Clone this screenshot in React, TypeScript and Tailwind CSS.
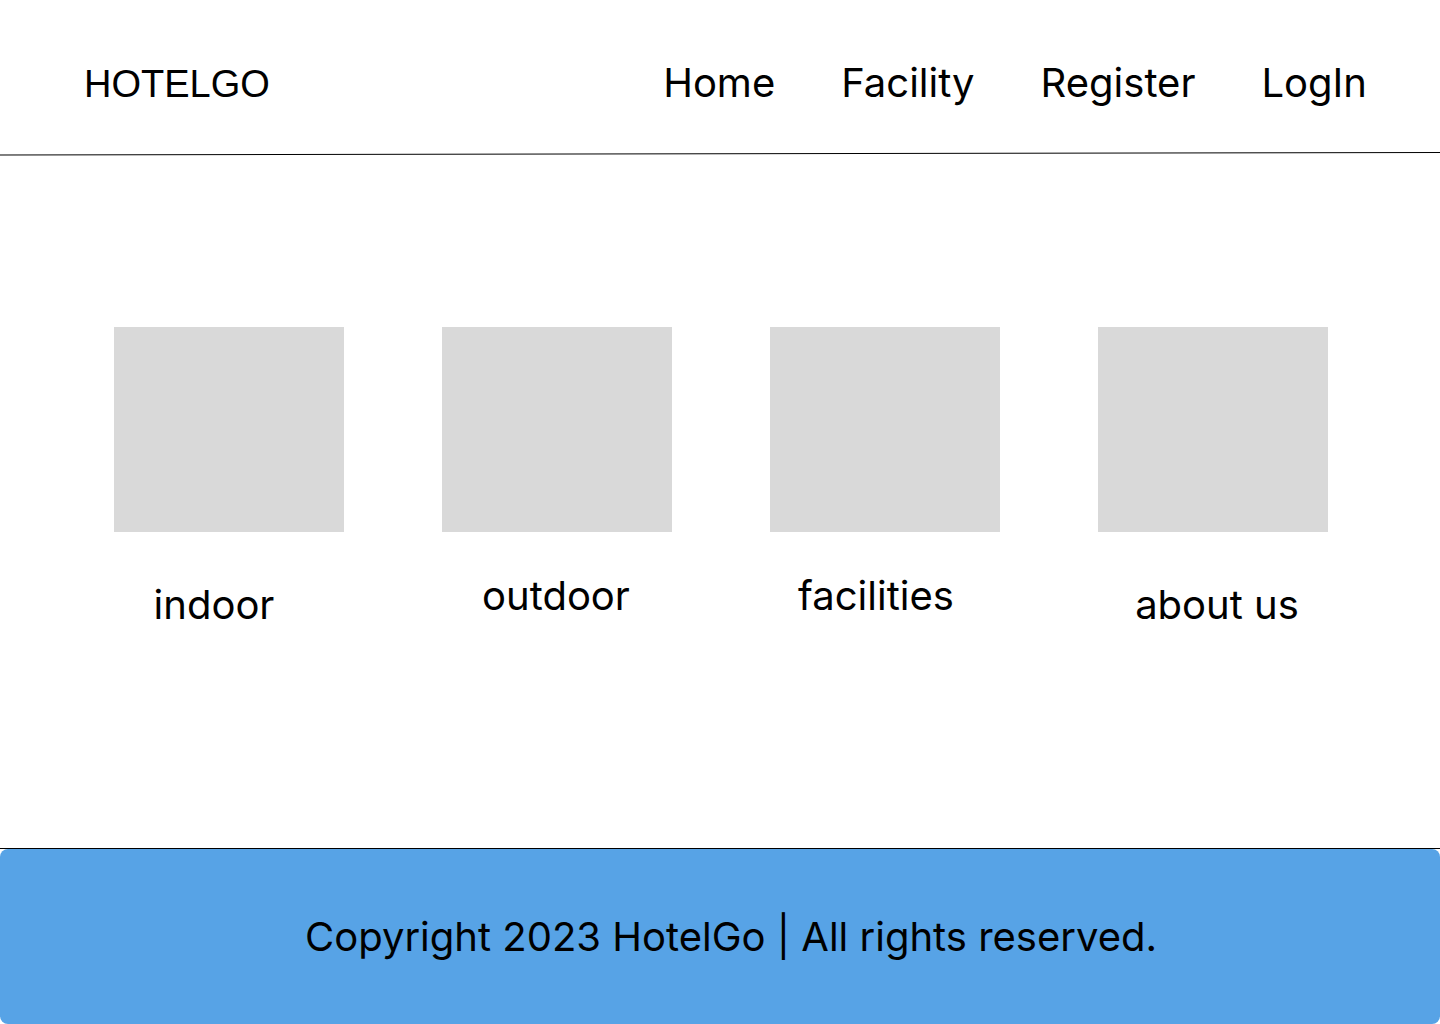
const cards = [
  { label: "indoor", labelClass: "mt-[49px] -ml-[30px]" },
  { label: "outdoor", labelClass: "mt-[40px] -ml-[2px]" },
  { label: "facilities", labelClass: "mt-[40px] -ml-[18px]" },
  { label: "about us", labelClass: "mt-[49px] ml-[8px]" },
];

const navItems = ["Home", "Facility", "Register", "LogIn"];

const App = () => {
  return (
    <div className="w-[1440px] h-[1024px] bg-white flex flex-col text-black font-['Inter',sans-serif] overflow-hidden">
      {/* header */}
      <header className="h-[152px] flex items-start justify-between pl-[84px] pr-[73px] pt-[59px]">
        <div className="mt-[3px] text-[38px] leading-[44px] font-['Liberation_Sans',Arial,sans-serif]">
          HOTELGO
        </div>
        <nav className="flex gap-[66px] text-[40px] leading-[48px]">
          {navItems.map((item, idx) => (
            <a key={idx} className="cursor-pointer">
              {item}
            </a>
          ))}
        </nav>
      </header>
      <svg className="block w-[1440px] h-[4px]" viewBox="0 0 1440 4" preserveAspectRatio="none">
        <line x1="0" y1="3" x2="1440" y2="0.5" stroke="#000" strokeWidth="1" />
      </svg>

      {/* cards */}
      <main className="flex-1 flex justify-center gap-[98px] pt-[171px] pl-[2px] border-b border-black">
        {cards.map((c, idx) => (
          <div key={idx} className="w-[230px] flex flex-col items-center">
            <div className="w-[230px] h-[205px] bg-[#d9d9d9]" />
            <div className={"whitespace-nowrap text-[40px] leading-[48px] " + c.labelClass}>
              {c.label}
            </div>
          </div>
        ))}
      </main>

      {/* footer */}
      <footer className="h-[175px] shrink-0 bg-[#57a3e6] rounded-lg flex items-center justify-center pl-[22px] pt-[1px]">
        <p className="whitespace-nowrap text-[40px] leading-[48px]">
          Copyright 2023 HotelGo | All rights reserved.
        </p>
      </footer>
    </div>
  );
};

export default App;
